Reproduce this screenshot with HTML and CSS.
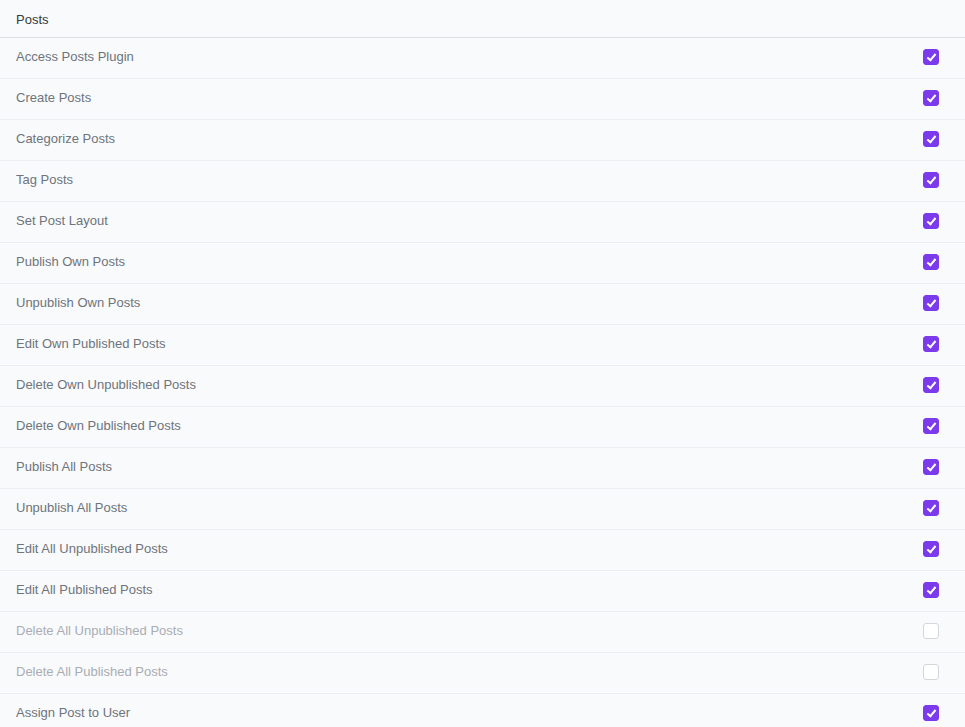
FILE: index.html
```html
<!DOCTYPE html>
<html lang="en">
<head>
   <meta charset="UTF-8">
   <meta name="viewport" content="width=device-width, initial-scale=1.0">
   <title>Permissions</title>
   <link rel="stylesheet" href="styles.css">
</head>
<body>
   <div class="perm-table">
       <div class="perm-head">Posts</div>
       <div class="perm-row"><span>Access Posts Plugin</span><span class="check on"></span></div>
       <div class="perm-row"><span>Create Posts</span><span class="check on"></span></div>
       <div class="perm-row"><span>Categorize Posts</span><span class="check on"></span></div>
       <div class="perm-row"><span>Tag Posts</span><span class="check on"></span></div>
       <div class="perm-row"><span>Set Post Layout</span><span class="check on"></span></div>
       <div class="perm-row"><span>Publish Own Posts</span><span class="check on"></span></div>
       <div class="perm-row"><span>Unpublish Own Posts</span><span class="check on"></span></div>
       <div class="perm-row"><span>Edit Own Published Posts</span><span class="check on"></span></div>
       <div class="perm-row"><span>Delete Own Unpublished Posts</span><span class="check on"></span></div>
       <div class="perm-row"><span>Delete Own Published Posts</span><span class="check on"></span></div>
       <div class="perm-row"><span>Publish All Posts</span><span class="check on"></span></div>
       <div class="perm-row"><span>Unpublish All Posts</span><span class="check on"></span></div>
       <div class="perm-row"><span>Edit All Unpublished Posts</span><span class="check on"></span></div>
       <div class="perm-row"><span>Edit All Published Posts</span><span class="check on"></span></div>
       <div class="perm-row off"><span>Delete All Unpublished Posts</span><span class="check"></span></div>
       <div class="perm-row off"><span>Delete All Published Posts</span><span class="check"></span></div>
       <div class="perm-row"><span>Assign Post to User</span><span class="check on"></span></div>
   </div>
</body>
</html>
```

FILE: styles.css
```css
body {
    margin: 0;
    background: #f9fafc;
    font-family: "Liberation Sans", Arial, sans-serif;
    font-size: 13px;
}
.perm-head {
    height: 36px;
    line-height: 37px;
    padding: 1px 16px 0;
    color: #343a40;
    border-bottom: 1px solid #dcdfe4;
}
.perm-row {
    display: flex;
    align-items: center;
    justify-content: space-between;
    height: 36px;
    padding: 0 26px 4px 16px;
    color: #6e747b;
    border-bottom: 1px solid #eceef1;
}
.perm-row.off {
    color: #a9adb3;
}
.check {
    width: 14px;
    height: 14px;
    margin-top: 2px;
    border: 1px solid #d3d7dd;
    border-radius: 3px;
    background: #fff;
    position: relative;
}
.check.on {
    background: #7c3aed;
    border-color: #7c3aed;
}
.check.on::after {
    content: "";
    position: absolute;
    left: 5px;
    top: 2px;
    width: 3px;
    height: 7px;
    border: solid #fff;
    border-width: 0 2px 2px 0;
    transform: rotate(40deg);
}
```
